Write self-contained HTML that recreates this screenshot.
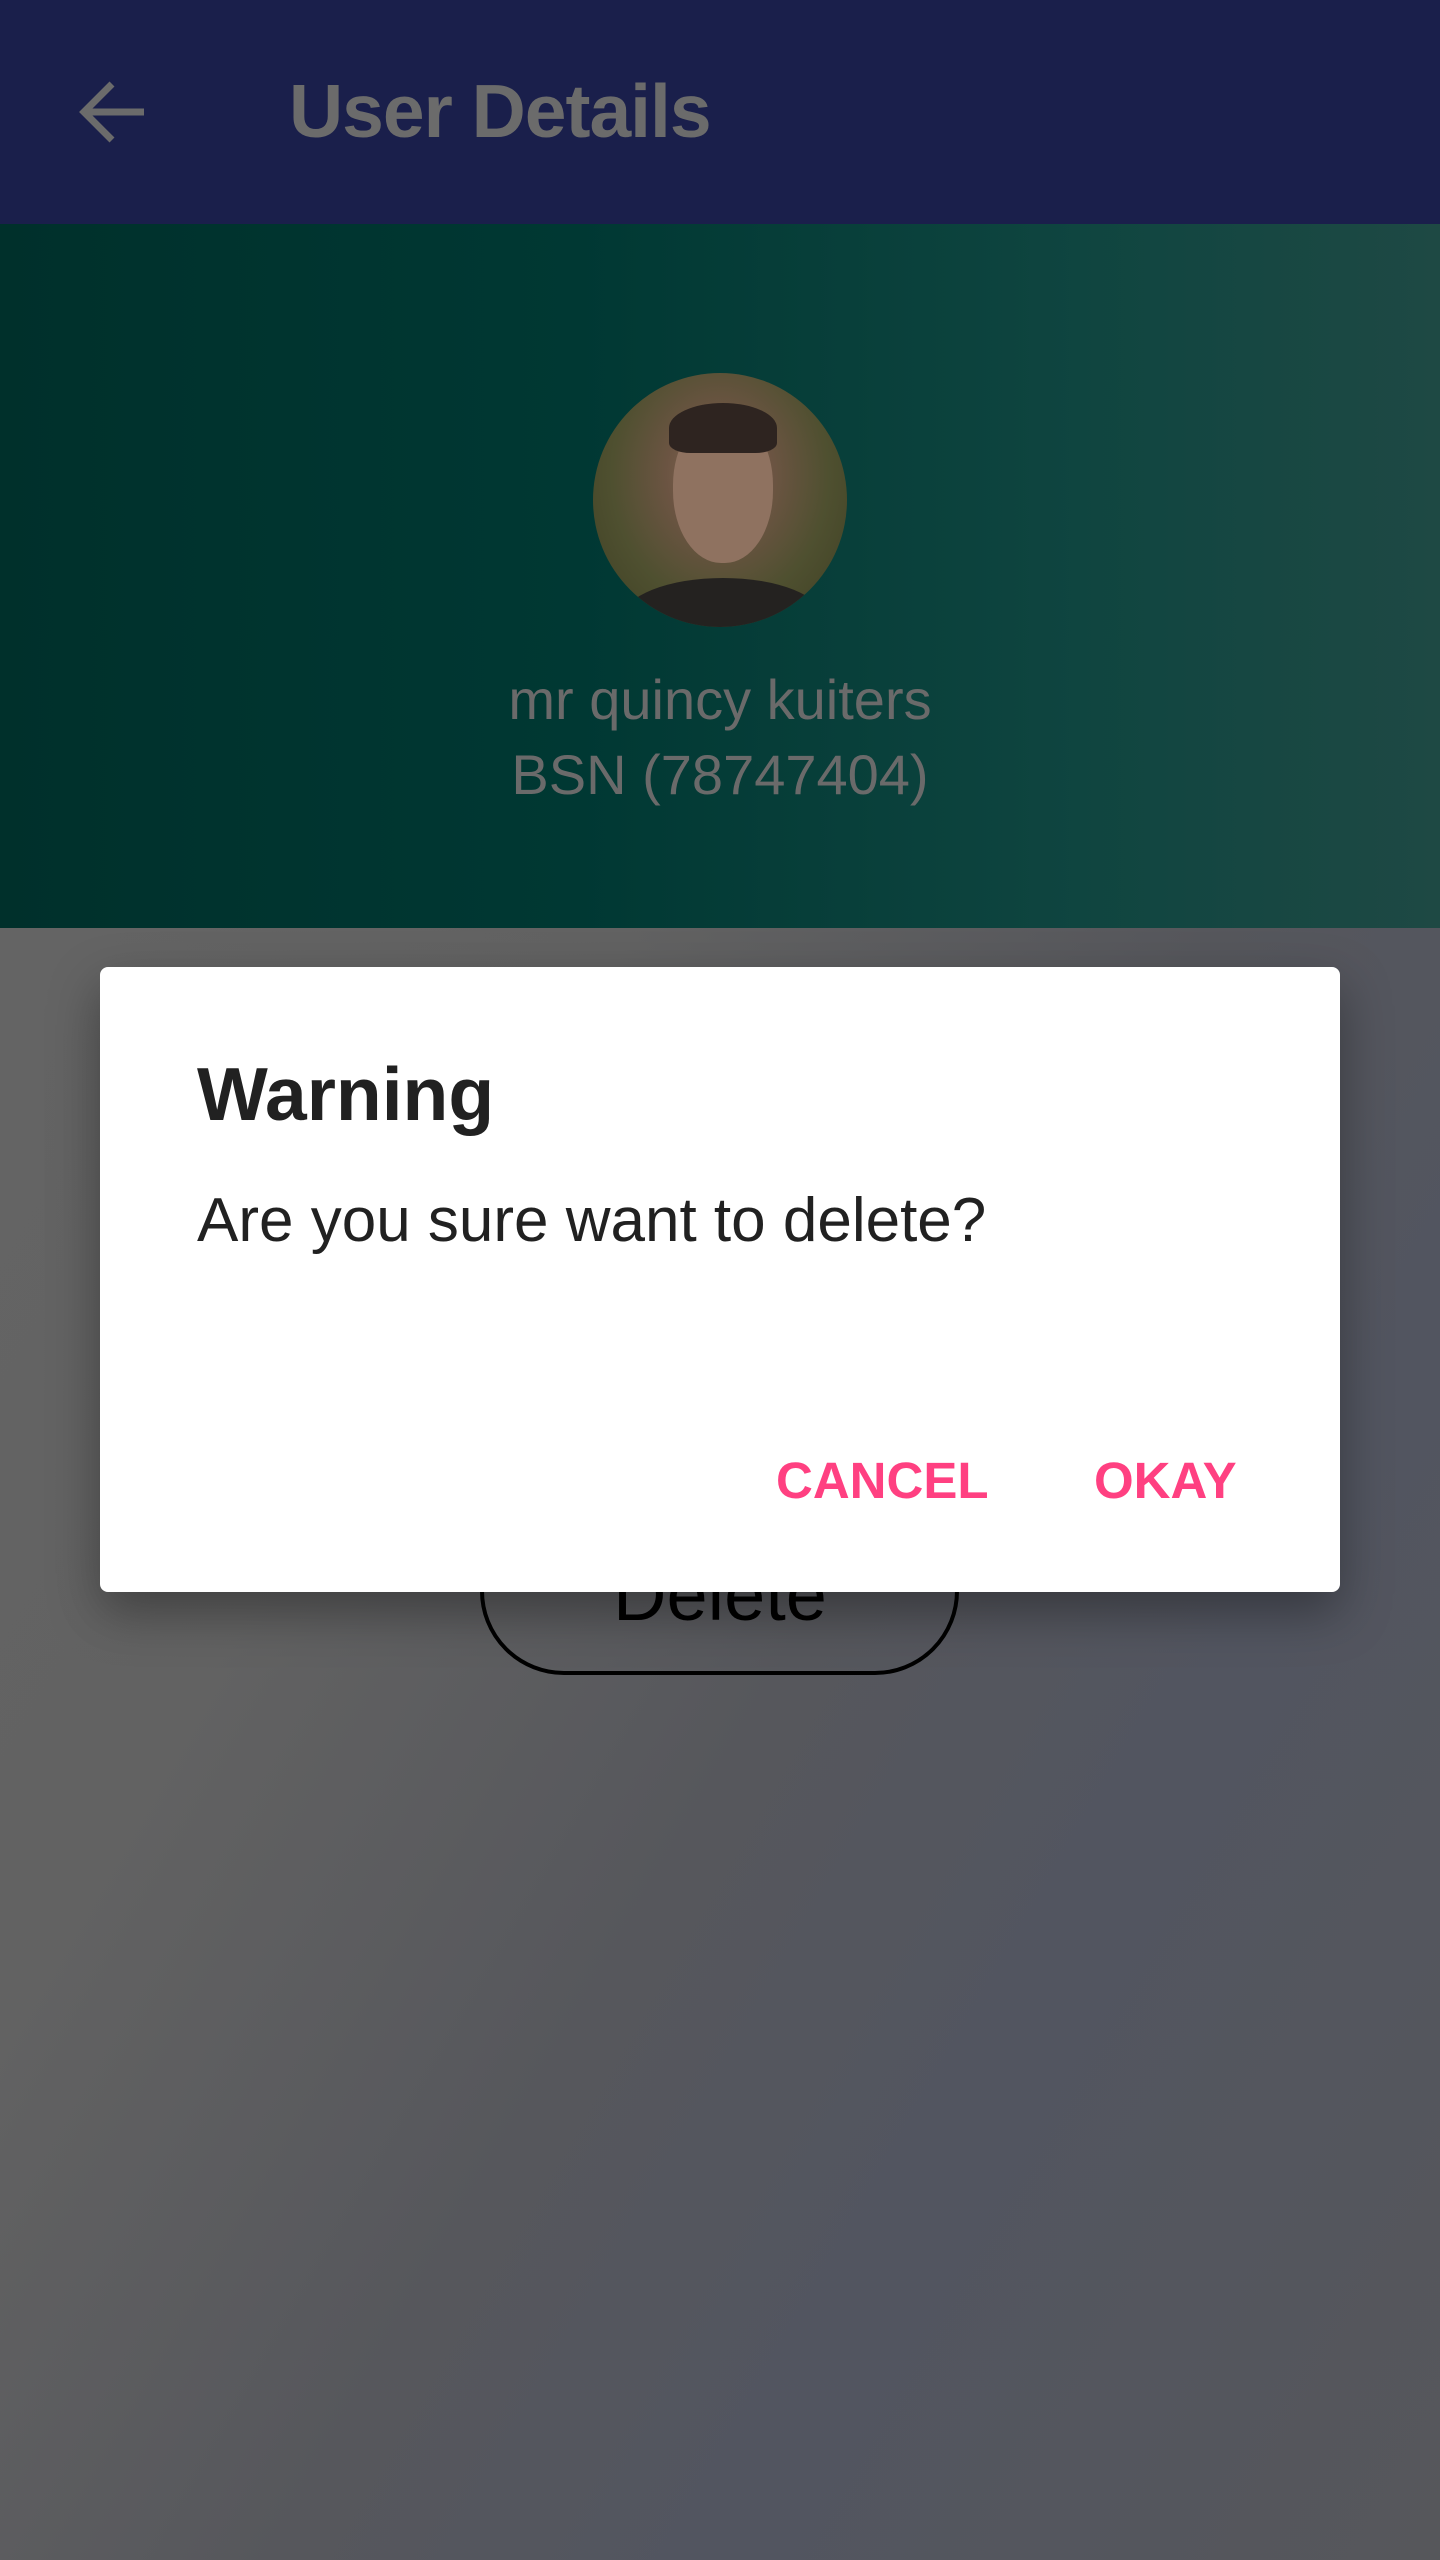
<!DOCTYPE html>
<html><head><meta charset="utf-8"><style>
html,body{margin:0;padding:0}
body{width:1440px;height:2560px;position:relative;overflow:hidden;font-family:"Liberation Sans",sans-serif;background:linear-gradient(120deg,#666 0%,#626262 40%,#56575c 60%,#525560 75%,#56575b 100%)}
.bar{position:absolute;left:0;top:0;width:1440px;height:224px;background:#1a1f4b}
.title{position:absolute;left:289px;top:68px;font-size:75px;font-weight:bold;color:#6b6b6b;letter-spacing:-1px}
.hdr{position:absolute;left:0;top:224px;width:1440px;height:704px;background:linear-gradient(90deg,#00302b 0%,#003833 40%,#0f4540 75%,#1e4944 100%)}
.av{position:absolute;left:593px;top:373px;width:254px;height:254px;border-radius:50%;background:radial-gradient(ellipse at 50% 40%,#8a6e5a 0%,#6b5442 30%,#4f5030 60%,#3c3e22 100%);overflow:hidden}
.name{position:absolute;left:0;width:1440px;text-align:center;color:#6a6a6a;font-size:56px}
.btn{position:absolute;left:480px;top:1506px;width:479px;height:169px;box-sizing:border-box;border:4px solid #000;border-radius:84px}
.btntxt{position:absolute;left:0;width:1440px;text-align:center;top:1552px;font-size:74px;color:#000}
.dlg{position:absolute;left:100px;top:967px;width:1240px;height:625px;background:#fff;border-radius:8px;box-shadow:0 20px 50px rgba(0,0,0,.35)}
.w{position:absolute;left:97px;top:84px;font-size:75px;font-weight:bold;color:#212121}
.q{position:absolute;left:97px;top:218px;font-size:62px;color:#212121}
.b{position:absolute;top:484px;font-size:51px;font-weight:bold;color:#ff4081}
</style></head><body>
<div class="bar">
<svg style="position:absolute;left:78px;top:80px" width="70" height="64" viewBox="0 0 70 64"><path d="M66 32H8M34 4L6 32l28 28" stroke="#6b6b6b" stroke-width="7" fill="none"/></svg>
<div class="title">User Details</div>
</div>
<div class="hdr"></div>
<div class="av">
<div style="position:absolute;left:80px;top:40px;width:100px;height:150px;border-radius:48%;background:#8f7260"></div>
<div style="position:absolute;left:76px;top:30px;width:108px;height:50px;border-radius:50% 50% 20% 20%;background:#2e2420"></div>
<div style="position:absolute;left:30px;top:205px;width:200px;height:80px;border-radius:50%;background:#242220"></div>
</div>
<div class="name" style="top:667px">mr quincy kuiters</div>
<div class="name" style="top:742px">BSN (78747404)</div>
<div class="btn"></div>
<div class="btntxt">Delete</div>
<div class="dlg">
<div class="w">Warning</div>
<div class="q">Are you sure want to delete?</div>
<div class="b" style="left:676px">CANCEL</div>
<div class="b" style="left:994px">OKAY</div>
</div>
</body></html>
